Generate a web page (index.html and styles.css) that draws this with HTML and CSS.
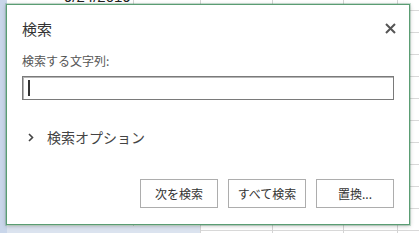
FILE: index.html
```html
<!DOCTYPE html>
<html lang="ja">
<head>
  <meta charset="UTF-8">
  <meta name="viewport" content="width=device-width, initial-scale=1.0">
  <title>検索</title>
  <link rel="stylesheet" href="styles.css">
</head>
<body>
  <!-- シート (背景) -->
  <div id="sheet">
    <div class="cell-text">9/24/2019</div>

    <!-- 検索ダイアログ -->
    <div id="find-dialog">
      <div class="dlg-head">
        <div class="dlg-title">検索</div>
        <svg class="dlg-close" width="11" height="11" viewBox="0 0 11 11">
          <path d="M1 1 L10 10 M10 1 L1 10" stroke="#555" stroke-width="2" fill="none"/>
        </svg>
      </div>
      <div class="dlg-label">検索する文字列:</div>
      <div class="find-input"><span class="caret"></span></div>
      <div class="options">
        <svg class="chev" width="6" height="9" viewBox="0 0 6 9">
          <path d="M1 1 L4.5 4.5 L1 8" stroke="#444" stroke-width="1.6" fill="none"/>
        </svg>
        <span>検索オプション</span>
      </div>
      <div class="buttons">
        <button class="btn">次を検索</button>
        <button class="btn">すべて検索</button>
        <button class="btn">置換...</button>
      </div>
    </div>
  </div>
</body>
</html>
```

FILE: styles.css
```css
html, body{
  margin: 0;
  padding: 0;
}
body{
  font-family: "Noto Sans CJK JP", "Noto Sans", sans-serif;
  background: #fff;
}
#sheet{
  position: relative;
  width: 419px;
  height: 233px;
  overflow: hidden;
  background:
    linear-gradient(#c9d6ea, #c9d6ea) no-repeat 0 0 / 7px 100%,
    linear-gradient(#dbe3ef, #dbe3ef) no-repeat 0 226px / 200px 7px,
    linear-gradient(to right,
      transparent 133px, #d4d4d4 133px, #d4d4d4 134px,
      transparent 134px, transparent 200px, #d4d4d4 200px, #d4d4d4 201px,
      transparent 201px, transparent 272px, #d4d4d4 272px, #d4d4d4 273px,
      transparent 273px, transparent 343px, #d4d4d4 343px, #d4d4d4 344px,
      transparent 344px, transparent 397px, #d4d4d4 397px, #d4d4d4 398px,
      transparent 398px),
    linear-gradient(#d9d9d9 0, #d9d9d9 1px, transparent 1px) repeat-y 0 10px / 100% 22px,
    #fff;
}
.cell-text{
  font-family: "Liberation Sans", Arial, sans-serif;
  font-size: 15px;
  line-height: 15px;
  color: #222;
  padding-left: 64px;
  margin-top: -11px;
}

/* ダイアログ */
#find-dialog{
  position: absolute;
  left: 6px;
  top: 4px;
  width: 404px;
  height: 221px;
  box-sizing: border-box;
  padding: 14px 15px 0 15px;
  background: #fff;
  border: 1px solid #5a9d73;
  box-shadow: 0 0 0 1px rgba(90, 157, 115, 0.3), 0 1px 4px rgba(0, 0, 0, 0.25);
}
.dlg-head{
  display: flex;
  justify-content: space-between;
  align-items: center;
  height: 20px;
}
.dlg-title{
  font-size: 15px;
  line-height: 20px;
  color: #333;
}
.dlg-close{
  margin-right: -2px;
  margin-top: -1px;
}
.dlg-label{
  margin-top: 14px;
  font-size: 12px;
  line-height: 16px;
  color: #555;
}
.find-input{
  margin-top: 7px;
  height: 24px;
  box-sizing: border-box;
  border: 1px solid #7a7a7a;
  box-shadow: inset 1px 1px 0 #b5b5b5;
  display: flex;
  align-items: center;
  padding-left: 5px;
}
.caret{
  width: 2px;
  height: 16px;
  background: #333;
}
.options{
  margin-top: 27px;
  height: 20px;
  display: flex;
  align-items: center;
  padding-left: 6px;
  font-size: 14px;
  color: #444;
}
.chev{
  margin-right: 13px;
  margin-top: 1px;
}
.buttons{
  margin-top: 32px;
  display: flex;
  justify-content: flex-end;
  gap: 10px;
}
.btn{
  width: 78px;
  height: 29px;
  padding: 0;
  background: #fff;
  border: 1px solid #adadad;
  font-family: "Noto Sans CJK JP", "Noto Sans", sans-serif;
  font-size: 12px;
  color: #333;
}
```
